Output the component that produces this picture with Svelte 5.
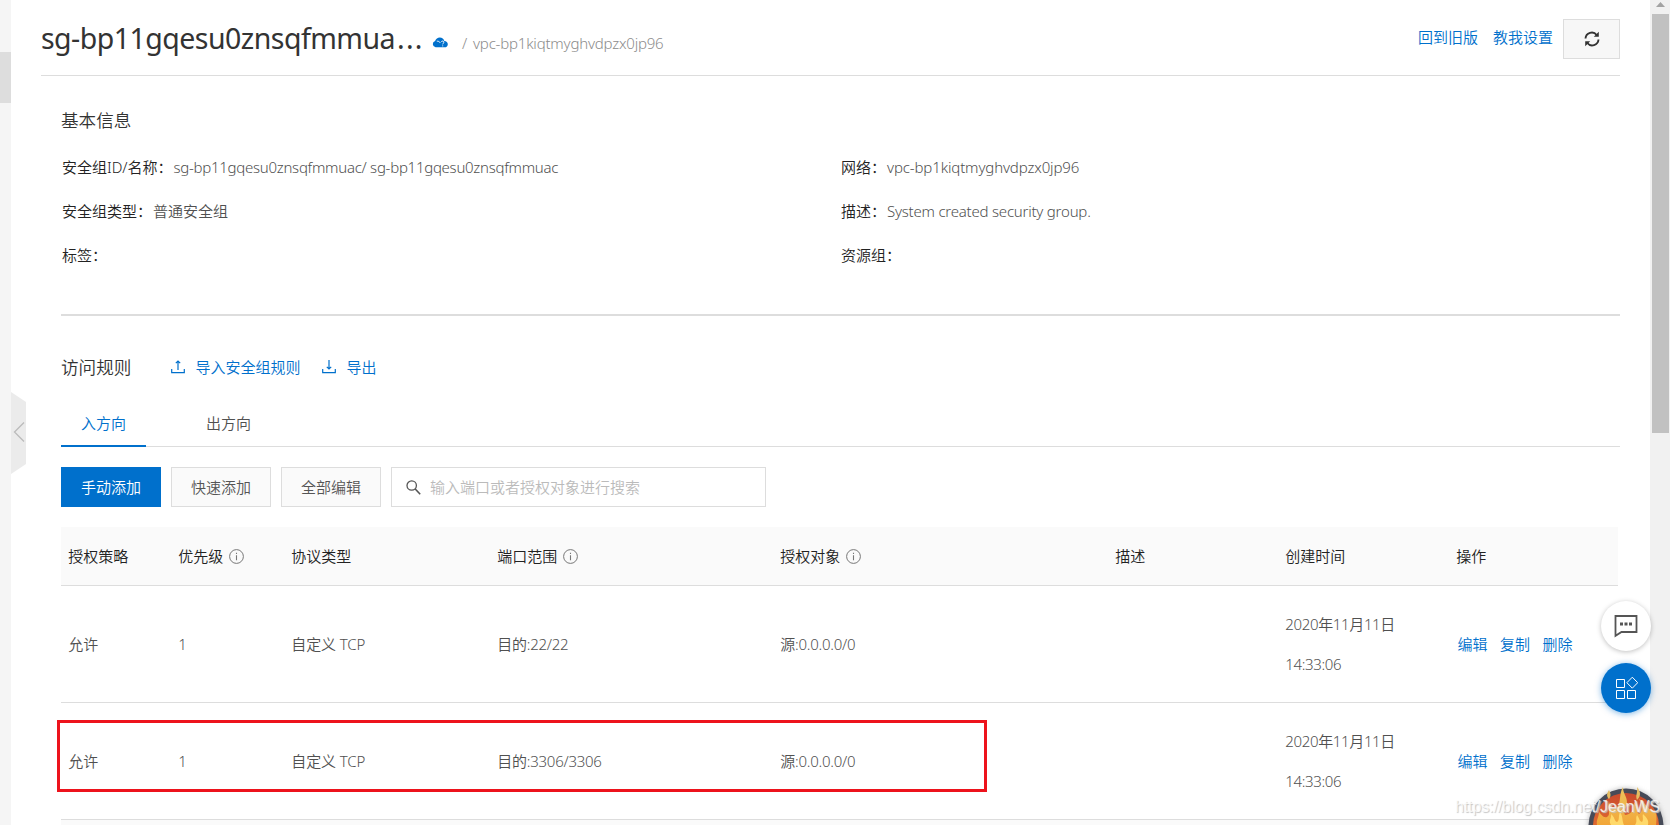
<script>
  const basics = [
    { label: '安全组ID/名称：', value: 'sg-bp11gqesu0znsqfmmuac/ sg-bp11gqesu0znsqfmmuac', kind: 'ids' },
    { label: '网络：', value: 'vpc-bp1kiqtmyghvdpzx0jp96', kind: 'net' },
    { label: '安全组类型：', value: '普通安全组' },
    { label: '描述：', value: 'System created security group.', kind: 'desc' },
    { label: '标签：', value: '' },
    { label: '资源组：', value: '' }
  ];
  const columns = [
    { name: '授权策略' },
    { name: '优先级', hint: true },
    { name: '协议类型' },
    { name: '端口范围', hint: true },
    { name: '授权对象', hint: true },
    { name: '描述' },
    { name: '创建时间' },
    { name: '操作' }
  ];
  const rules = [
    { policy: '允许', priority: 1, protocol: '自定义 TCP', port: '目的:22/22', source: '源:0.0.0.0/0', date: '2020年11月11日', time: '14:33:06' },
    { policy: '允许', priority: 1, protocol: '自定义 TCP', port: '目的:3306/3306', source: '源:0.0.0.0/0', date: '2020年11月11日', time: '14:33:06' }
  ];
  const actions = ['编辑', '复制', '删除'];
</script>

<div class="page">
  <aside class="rail"><div class="rail-active"></div></aside>

  <main>
    <header>
      <h1>sg-bp11gqesu0znsqfmmua<span class="dots">...</span></h1>
      <svg class="cloud" width="16" height="11" viewBox="0 0 16 11">
        <path d="M3.600 10.300a3.300 3.300 0 0 1-.5-6.400C4 1.600 5.600.4 7.800.4c2.300 0 4 1.300 4.500 3.500 2 .2 3.500 1.500 3.500 3.300 0 1.900-1.300 3.100-3.200 3.100z" fill="#0070cc" />
        <path d="M4.800 4.200c1.600-.2 2.700.4 3.500 1.700M9.300 5c.3-1.400 2.700-1.300 2.600.2 0 1-1.200 1-1.200 2.200M10.700 8.400v1" stroke="#fff" stroke-width=".9" fill="none" />
      </svg>
      <span class="vpc"><span class="slash">/</span>vpc-bp1kiqtmyghvdpzx0jp96</span>
      <div class="header-actions">
        <a href="#old">回到旧版</a>
        <a href="#help">教我设置</a>
        <button class="refresh" aria-label="refresh">
          <svg width="16" height="16" viewBox="0 0 16 16" fill="none" stroke="#333" stroke-width="1.900">
            <path d="M1.500 7.500A6.300 6.300 0 0 1 12.700 4M14.500 8.500A6.300 6.300 0 0 1 3.300 12" />
            <path d="M14.800.8v5h-5zM1.200 15.200v-5h5z" fill="#333" stroke="none" />
          </svg>
        </button>
      </div>
    </header>

    <div class="content">
      <section class="basic">
        <h2>基本信息</h2>
        <div class="info">
          {#each basics as item}
            <div class="field"><span class="label">{item.label}</span><span class="value {item.kind ?? ''}">{item.value}</span></div>
          {/each}
        </div>
      </section>

      <section class="access">
        <div class="access-head">
          <h2>访问规则</h2>
          <a href="#import" class="import">
            <svg width="14" height="14" viewBox="0 0 14 14" fill="none" stroke="#0070cc" stroke-width="1.200"><path d="M.7 9v3.700h12.600V9M7 10V1M4.800 3.200 7 1l2.200 2.200" /></svg>
            导入安全组规则
          </a>
          <a href="#export" class="export">
            <svg width="14" height="14" viewBox="0 0 14 14" fill="none" stroke="#0070cc" stroke-width="1.200"><path d="M.7 9v3.700h12.600V9M7 0v9M4.800 6.800 7 9l2.200-2.200" /></svg>
            导出
          </a>
        </div>

        <nav>
          <span class="tab active">入方向</span>
          <span class="tab">出方向</span>
        </nav>

        <div class="toolbar">
          <button class="btn primary">手动添加</button>
          <button class="btn">快速添加</button>
          <button class="btn">全部编辑</button>
          <div class="search">
            <svg width="15" height="15" viewBox="0 0 15 15" fill="none" stroke="#555" stroke-width="1.300"><circle cx="5.700" cy="5.500" r="4.700" /><path d="m9 8.800 5.200 5.400" stroke-width="1.600" /></svg>
            <span>输入端口或者授权对象进行搜索</span>
          </div>
        </div>

        <div class="table">
          <div class="tr head">
            {#each columns as col}
              <div class="td">
                {col.name}
                {#if col.hint}
                  <svg class="hint" width="15" height="15" viewBox="0 0 15 15" fill="none" stroke="#777"><circle cx="7.500" cy="7.500" r="6.900" stroke-width="1" /><path d="M7.500 6.300v5M7.500 3.700v1.300" stroke-width="1.100" /></svg>
                {/if}
              </div>
            {/each}
          </div>
          {#each rules as rule}
            <div class="tr">
              <div class="td">{rule.policy}</div>
              <div class="td">{rule.priority}</div>
              <div class="td protocol">{rule.protocol}</div>
              <div class="td tight">{rule.port}</div>
              <div class="td tight">{rule.source}</div>
              <div class="td"></div>
              <div class="td date"><span>{rule.date}</span><span>{rule.time}</span></div>
              <div class="td ops">{#each actions as action}<a href="#rule">{action}</a>{/each}</div>
            </div>
          {/each}
          <div class="foot"></div>
        </div>
      </section>
    </div>
  </main>

  <div class="scrollbar">
    <svg width="20" height="14" viewBox="0 0 20 14"><path d="M6 7l4.500-5L15 7z" fill="#a3a3a3" /></svg>
    <div class="thumb"></div>
  </div>

  <svg class="handle" width="15" height="82" viewBox="0 0 15 82"><path d="M0 0 15 10V72L0 82z" fill="#ebebeb" /><path d="M13 30.500 3.500 40 13 49.500" fill="none" stroke="#bbb" stroke-width="1.300" /></svg>
  <div class="highlight"></div>

  <div class="float chat">
    <svg width="24" height="24" viewBox="0 0 24 24" fill="none" stroke="#555" stroke-width="1.800"><path d="M1.500 2h21v16H7.500L1.500 21.800z" /><path d="M6 10h3M10.500 10h3M15 10h3" stroke-width="3" /></svg>
  </div>
  <div class="float apps">
    <svg width="24" height="24" viewBox="0 0 24 24" fill="none" stroke="#fff" stroke-width="1"><path d="M2.500 3.500h8v8h-8zM2.500 14.500h8v8h-8zM13.500 14.500h8v8h-8zM18.300 1.200l5.400 5.500-5.400 5.500-5.400-5.500z" /></svg>
  </div>

  <svg class="flame" width="86" height="42" viewBox="0 0 86 42">
    <defs>
      <linearGradient id="fire" x1="0" y1="0" x2="0" y2="1"><stop offset="0" stop-color="#c94a2c" /><stop offset=".5" stop-color="#e06a30" /></linearGradient>
      <linearGradient id="tongue" x1="0" y1="0" x2="0" y2="1"><stop offset="0" stop-color="#ecc55e" /><stop offset="1" stop-color="#f2a638" /></linearGradient>
      <filter id="soft" x="-20%" y="-20%" width="140%" height="140%"><feGaussianBlur stdDeviation="2.500" /></filter>
    </defs>
    <circle cx="43" cy="43" r="38" fill="#999" opacity=".6" filter="url(#soft)" />
    <circle cx="43" cy="43" r="37.500" fill="#474b58" />
    <circle cx="43" cy="43" r="33" fill="url(#fire)" />
    <path d="M14 42c-1-5 2-8 2-13 3 3 4 6 8 5 5-3-1-9 2-15 2 6 6 8 9 4 3-5 1-12 5-19 0 7 4 9 4 16 0 5-4 8-2 12 5 0 10-5 9-13 5 5 2 10 5 12 5-3 3-10 0-15 7 4 9 11 14 12 4 1 4 6 3 14z" fill="url(#tongue)" />
    <path d="M28 42c-3-5 1-7 0-11 4 3 3 7 6 8 3-2 1-6 3-10 3 4 2 9 4 13zM52 42c3-4 0-6 2-10 3 4 2 6 5 7 2-3 0-5 1-8 4 4 6 6 5 11z" fill="#ffd96a" />
    <path d="M54 17c-2-5 1-7 0-13 4 5 4 9 0 13zM26 16c-3-3-2-6 0-9 2 4 2 6 0 9z" fill="#e5bd62" />
  </svg>
  <div class="watermark">https://blog.csdn.net/JeanWS</div>
</div>

<style>
  :global(body) { margin: 0; overflow: hidden; background: #fff; }
  .page {
    position: relative; display: flex; width: 1670px; height: 825px; overflow: hidden;
    font: 350 15px/20px "Noto Sans", "Noto Sans CJK SC", sans-serif; color: #505050; background: #fff;
  }
  a { color: #0070cc; text-decoration: none; white-space: nowrap; }
  h1, h2 { margin: 0; font-weight: 400; color: #333; white-space: nowrap; }
  h2 { font-size: 17.6px; line-height: 24px; font-weight: 350; }
  button { font: inherit; box-sizing: border-box; padding: 0; }

  .rail { width: 11px; flex: none; background: #f5f5f5; padding-top: 52px; box-sizing: border-box; }
  .rail-active { height: 51px; background: #ddd; }
  main { flex: none; width: 1579px; margin: 0 30px; }

  header { display: flex; align-items: center; height: 75px; border-bottom: 1px solid #ddd; }
  h1 { width: 391px; font-size: 28.5px; line-height: 40px; letter-spacing: -.53px; padding-top: 1px; }
  .dots { letter-spacing: 1.3px; margin-left: 2px; }
  .cloud { margin-top: 10px; flex: none; }
  .vpc { margin: 10px 0 0 14px; color: #8c8c8c; letter-spacing: -.2px; white-space: nowrap; }
  .slash { margin-right: 6px; }
  .header-actions { margin-left: auto; display: flex; align-items: center; gap: 15px; padding-top: 3px; }
  .header-actions a { padding-bottom: 4px; }
  .refresh { width: 57px; height: 40px; margin-left: -5px; border: 1px solid #ddd; background: #f7f7f7; display: flex; align-items: center; justify-content: center; }

  .content { padding-left: 20px; }
  .basic { height: 206px; padding-top: 32px; border-bottom: 2px solid #ddd; }
  .info { display: grid; grid-template-columns: 779px 1fr; grid-auto-rows: 44px; padding: 13px 0 0 1px; }
  .field { display: flex; align-items: center; white-space: nowrap; }
  .label { color: #222; }
  .value { color: #505050; margin-left: 1px; }
  .ids { letter-spacing: -.27px; }
  .net { letter-spacing: -.13px; }
  .desc { letter-spacing: -.22px; }

  .access-head { display: flex; align-items: center; height: 24px; padding-top: 39px; }
  .access-head h2 { padding-bottom: 1px; }
  .access-head a { display: flex; align-items: center; gap: 10px; }
  .import { margin-left: 40px; }
  .export { margin-left: 22px; }
  nav { display: flex; height: 44px; margin-top: 23px; border-bottom: 1px solid #ddd; }
  .tab { height: 43px; line-height: 43px; padding: 0 20px; margin-right: 40px; }
  .tab.active { color: #0070cc; border-bottom: 2px solid #0070cc; }

  .toolbar { display: flex; gap: 10px; margin-top: 20px; }
  .btn { width: 100px; height: 40px; border: 1px solid #ddd; background: #fafafa; color: #555; }
  .btn.primary { background: #0070cc; border-color: #0070cc; color: #fff; }
  .search { box-sizing: border-box; width: 375px; height: 40px; border: 1px solid #ddd; display: flex; align-items: center; gap: 9px; padding-left: 14px; color: #bbb; }

  .table { width: 1557px; margin-top: 20px; }
  .tr { display: grid; grid-template-columns: 110px 113px 206px 283px 335px 170px 171px 169px; height: 116px; border-bottom: 1px solid #ddd; }
  .tr.head { height: 58px; background: #fafafa; color: #222; }
  .td { display: flex; align-items: center; padding-left: 7.3px; white-space: nowrap; }
  .hint { margin-left: 5.7px; }
  .tight { letter-spacing: -.25px; }
  .protocol { letter-spacing: -.1px; }
  .date { flex-direction: column; align-items: flex-start; justify-content: center; line-height: 40px; letter-spacing: -.35px; }
  .ops { gap: 12.5px; padding-left: 8.5px; }
  .foot { height: 6px; background: #fafafa; }

  .scrollbar { width: 20px; flex: none; height: 825px; background: #f1f1f1; }
  .scrollbar svg { display: block; }
  .thumb { width: 17px; height: 419px; margin-left: 2px; background: #c1c1c1; }

  .handle { position: absolute; left: 11px; top: 392px; }
  .highlight { position: absolute; left: 57px; top: 720px; width: 924px; height: 66px; border: 3px solid #ed131c; }
  .float { position: absolute; left: 1601px; width: 50px; height: 50px; border-radius: 50%; display: flex; align-items: center; justify-content: center; }
  .chat { top: 601px; background: #fff; box-shadow: 0 1px 5px rgba(0, 0, 0, .25); }
  .apps { top: 663px; background: #0070cc; box-shadow: 0 1px 6px rgba(0, 112, 204, .5); }
  .flame { position: absolute; left: 1583px; top: 783px; }
  .watermark { position: absolute; left: 1455px; top: 797px; font: 400 16px/20px "Liberation Sans", Arial, sans-serif; letter-spacing: -.12px; color: rgba(255, 255, 255, .8); text-shadow: 1px 1px 1px #c4c4c4; white-space: nowrap; }
</style>
